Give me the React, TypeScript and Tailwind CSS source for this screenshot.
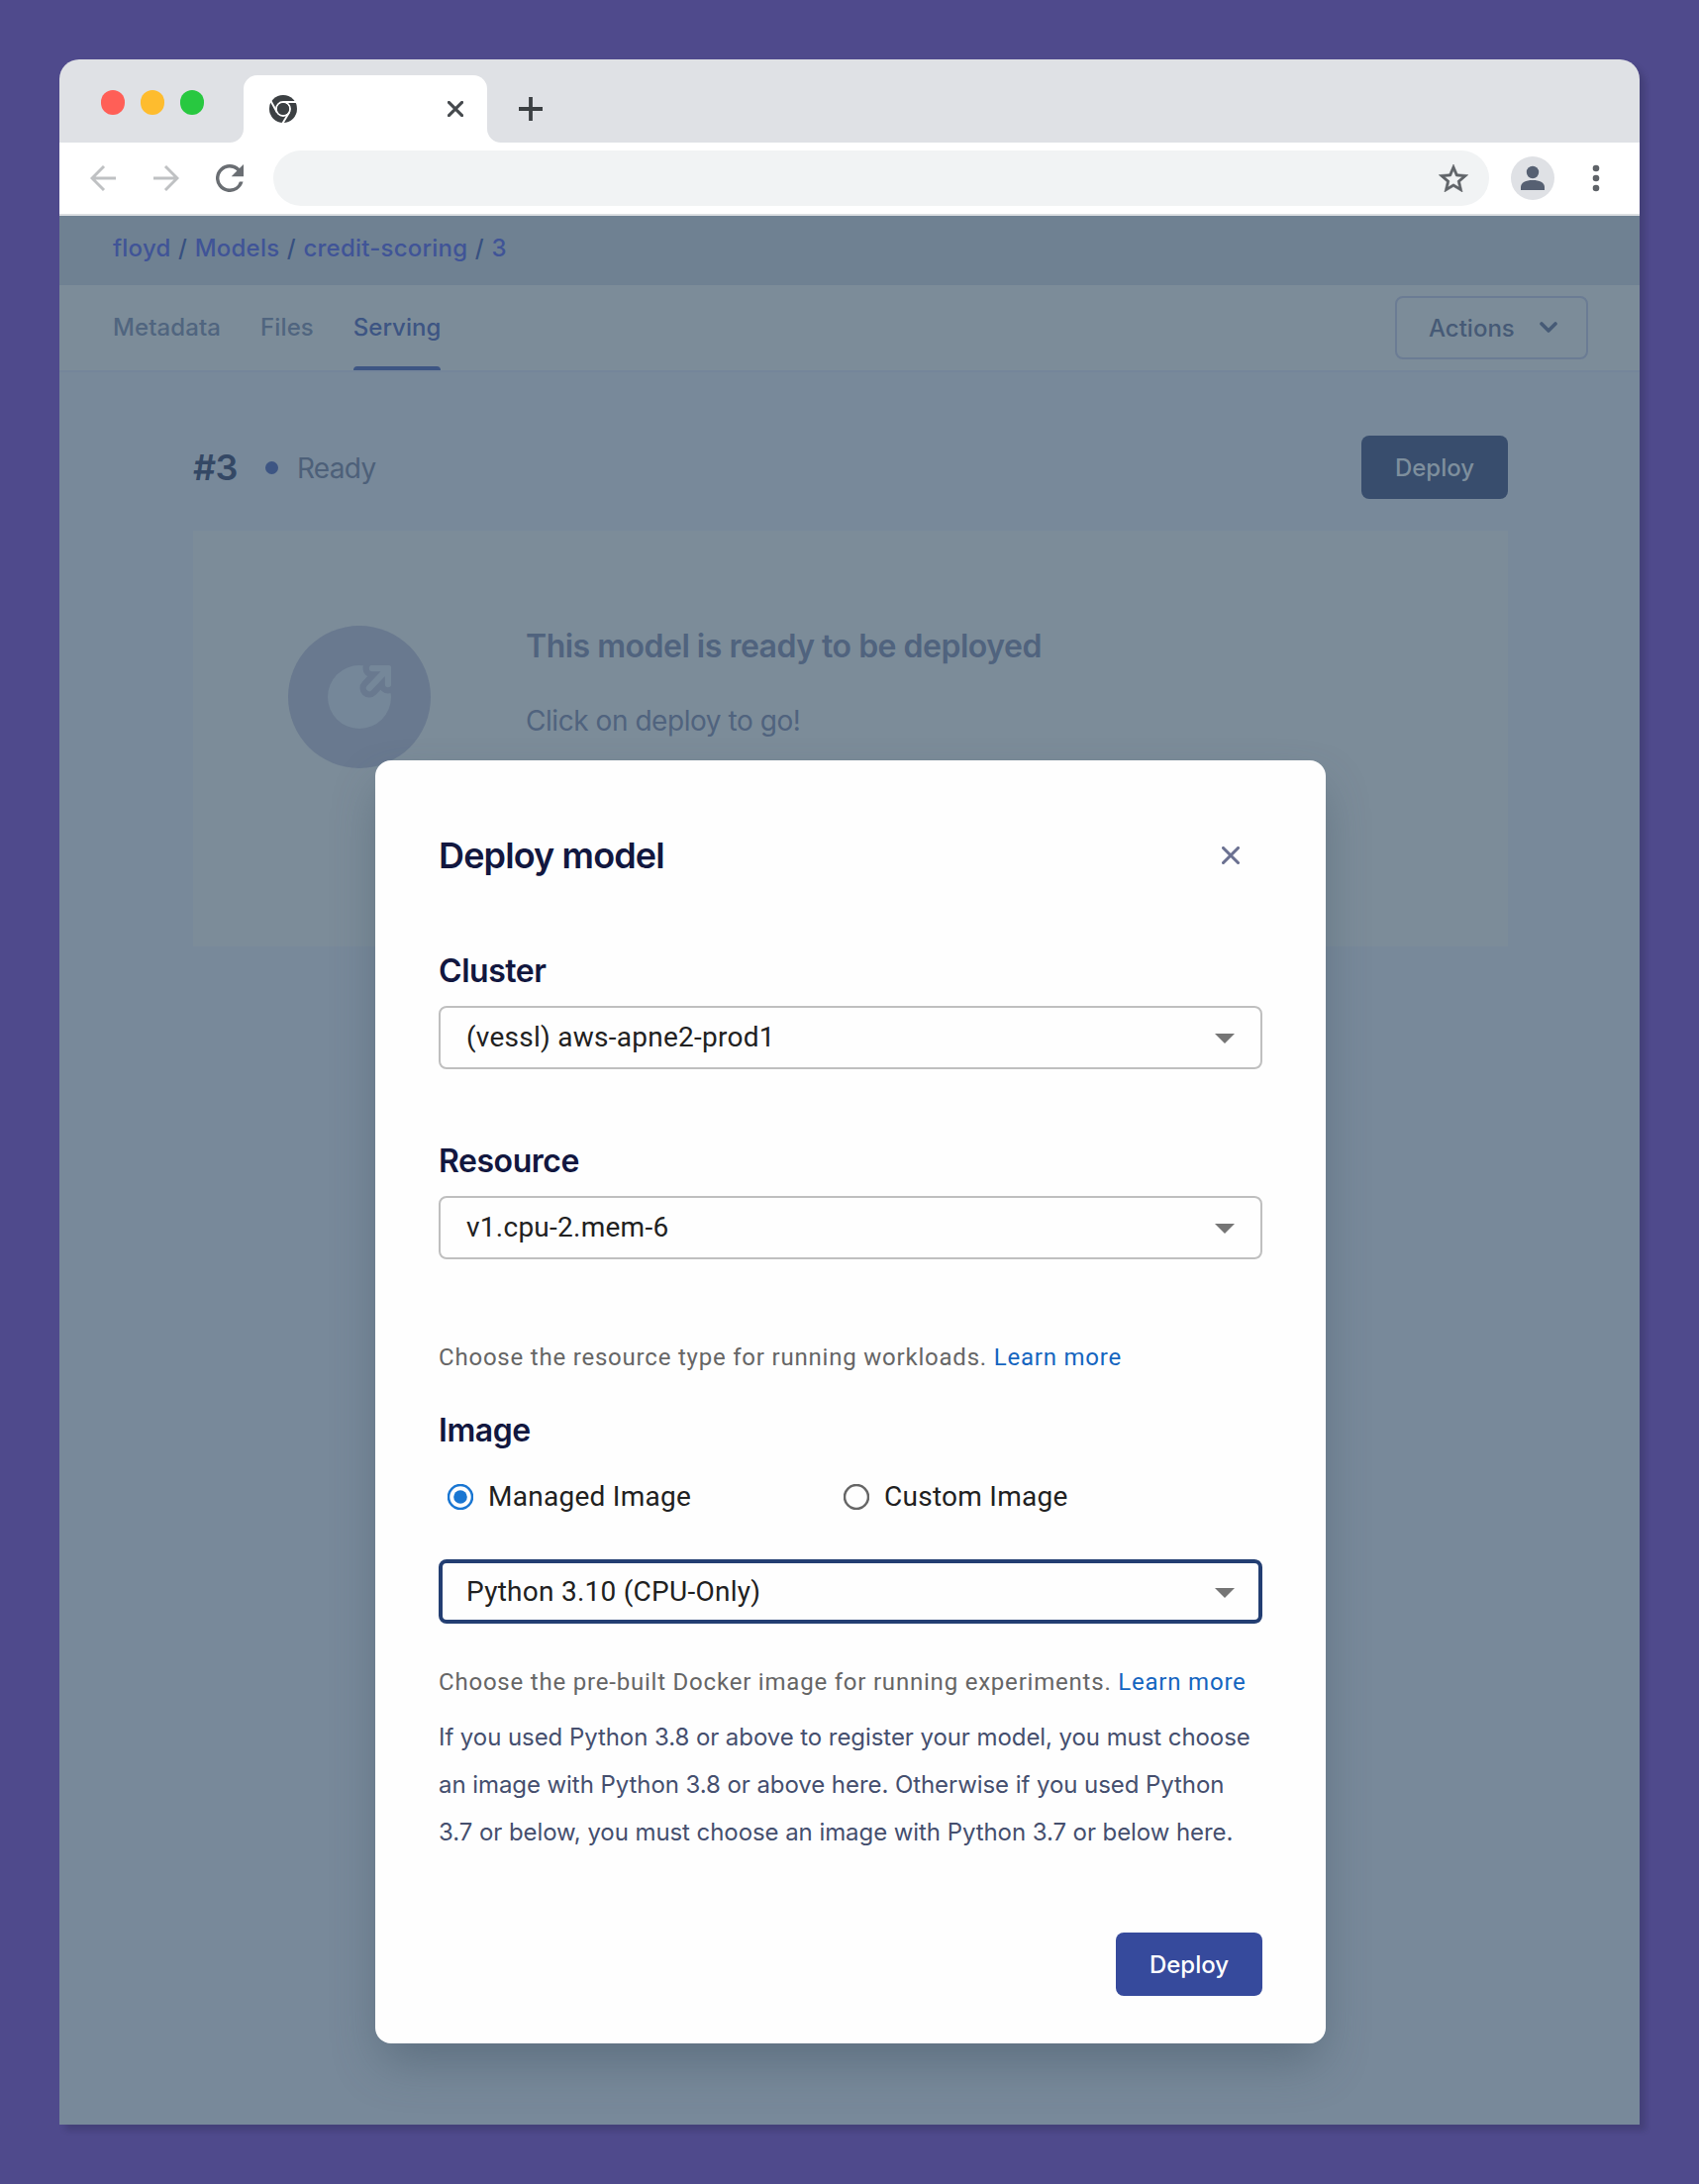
import type { ReactNode } from 'react';

function ChromeLogo() {
  return (
    <svg viewBox="0 0 28 28" className="h-7 w-7">
      <circle cx="14" cy="14" r="14" fill="#3c4043" />
      <g stroke="#ffffff" strokeWidth="1.9" fill="none">
        <circle cx="14" cy="14" r="7" />
        <path d="M14 7H27.2" />
        <path d="M7.9 17.5L1.5 6" />
        <path d="M20.1 17.5L13.3 28.8" />
      </g>
      <circle cx="14" cy="14" r="6.1" fill="#3c4043" />
    </svg>
  );
}

function BrowserTabs() {
  return (
    <div className="flex h-[84px] items-end bg-[#dfe1e5]">
      <div className="flex h-[84px] w-[186px] items-center gap-4 pt-[2px] pl-[42px]">
        <span className="h-[25px] w-6 rounded-full bg-[#ff5f57]" />
        <span className="h-[25px] w-6 rounded-full bg-[#febc2e]" />
        <span className="h-[25px] w-6 rounded-full bg-[#28c840]" />
      </div>
      <svg viewBox="0 0 14 14" className="-ml-[14px] h-3.5 w-3.5">
        <path d="M14 0V14H0A14 14 0 0 0 14 0Z" fill="#ffffff" />
      </svg>
      <div className="flex h-[68px] w-[246px] items-center justify-between rounded-t-[14px] bg-white pr-[24px] pl-[26px]">
        <ChromeLogo />
        <svg viewBox="0 0 16 16" className="h-4 w-4" stroke="#45494d" strokeWidth="3.1">
          <path d="M1.4 1.4L14.6 14.6M14.6 1.4L1.4 14.6" strokeLinecap="round" />
        </svg>
      </div>
      <svg viewBox="0 0 14 14" className="h-3.5 w-3.5">
        <path d="M0 0V14H14A14 14 0 0 1 0 0Z" fill="#ffffff" />
      </svg>
      <svg viewBox="0 0 24 24" className="mb-[22px] ml-[18px] h-6 w-6" stroke="#3c4043" strokeWidth="3.8">
        <path d="M12 0V24M0 12H24" />
      </svg>
    </div>
  );
}

function Toolbar() {
  return (
    <div className="flex h-[74px] items-center border-b-2 border-[#dcdfe2] bg-white pl-[31px]">
      <svg viewBox="0 0 26 26" className="h-[26px] w-[26px]" fill="none" stroke="#bfc1c3" strokeWidth="2.9">
        <path d="M26 13H2M14 1L2 13L14 25" />
      </svg>
      <svg viewBox="0 0 26 26" className="ml-[38px] h-[26px] w-[26px]" fill="none" stroke="#bfc1c3" strokeWidth="2.9">
        <path d="M0 13H24M12 1L24 13L12 25" />
      </svg>
      <svg viewBox="4 4 16 16" className="ml-[37px] h-7 w-7" fill="#6a6e73">
        <path d="M17.65 6.35A7.958 7.958 0 0 0 12 4a8 8 0 1 0 7.73 10h-2.08A5.99 5.99 0 0 1 12 18a6 6 0 1 1 4.22-10.22L13 11h7V4l-2.35 2.35z" />
      </svg>
      <div className="ml-[30px] flex h-14 w-[1228px] items-center justify-end rounded-full bg-[#f1f3f4] pr-[21px]">
        <svg viewBox="2 2 20 19" className="h-[28px] w-[30px]" fill="#5f6368" stroke="#5f6368" strokeWidth="0.35">
          <path d="m22 9.24-7.19-.62L12 2 9.19 8.63 2 9.24l5.46 4.73L5.82 21 12 17.27 18.18 21l-1.63-7.03L22 9.24zM12 15.4l-3.76 2.27 1-4.28-3.32-2.88 4.38-.38L12 6.1l1.71 4.04 4.38.38-3.32 2.88 1 4.28L12 15.4z" />
        </svg>
      </div>
      <svg viewBox="0 0 44 44" className="ml-[22px] h-11 w-11">
        <circle cx="22" cy="22" r="22" fill="#dfe1e5" />
        <circle cx="22" cy="16" r="6.2" fill="#566072" />
        <path d="M10 34V31C10 26.5 15 24 22 24S34 26.5 34 31V34Z" fill="#566072" />
      </svg>
      <svg viewBox="0 0 8 28" className="ml-[38px] h-7 w-2" fill="#5f6368">
        <circle cx="4" cy="4" r="3.3" />
        <circle cx="4" cy="14" r="3.3" />
        <circle cx="4" cy="24" r="3.3" />
      </svg>
    </div>
  );
}

function Breadcrumb() {
  const items = ['floyd', 'Models', 'credit-scoring', '3'];
  return (
    <div className="flex h-[70px] items-center gap-[7.5px] bg-[#6f8192] pb-[4px] pl-[54px] text-2xl font-medium tracking-[0.23px] text-[#405497]">
      {items.map((item, i) => (
        <span key={item} className="flex gap-[7.5px]">
          {i > 0 && <span className="text-[#375080]">/</span>}
          {item}
        </span>
      ))}
    </div>
  );
}

function TabBar() {
  return (
    <div className="flex h-[86px] items-center justify-between bg-[#7c8c99] pr-[52px] pl-[54px] text-2xl font-medium">
      <div className="flex h-full gap-10 tracking-[0.1px] text-[#50657f]">
        <span className="flex items-center">Metadata</span>
        <span className="flex items-center">Files</span>
        <span className="relative flex items-center tracking-normal text-[#3d5583]">
          Serving
          <span className="absolute inset-x-0 bottom-0 h-1 rounded-t-sm bg-[#3d5583]" />
        </span>
      </div>
      <div className="flex h-16 w-[195px] items-center justify-between rounded-lg border-2 border-[#6b7c94] pr-[28px] pl-[32px] text-[#465a76]">
        <span className="pt-[2px]">Actions</span>
        <svg viewBox="0 0 20 12" className="h-3 w-5" fill="none" stroke="#465a76" strokeWidth="3.6" strokeLinecap="round" strokeLinejoin="round">
          <path d="M3 2L10 9L17 2" />
        </svg>
      </div>
    </div>
  );
}

function DeployIcon() {
  return (
    <div className="flex h-36 w-36 items-center justify-center rounded-full bg-[#69798f]">
      <svg viewBox="0 0 64 64" className="h-16 w-16" fill="none" strokeLinecap="round" strokeLinejoin="round">
        <circle cx="32" cy="32" r="32" fill="#758799" />
        <g stroke="#69798f" strokeWidth="19">
          <path d="M45 3H61V19M61 3L42 23" />
        </g>
        <g stroke="#758799" strokeWidth="6.4">
          <path d="M45 3H61V19M61 3L42 23" />
        </g>
      </svg>
    </div>
  );
}

function Page() {
  return (
    <div className="border-t-2 border-[#74859a] pt-16 pr-[133px] pl-[135px]">
      <div className="flex h-16 items-center">
        <h1 className="text-4xl leading-none font-semibold tracking-[-0.6px] text-[#344865]">#3</h1>
        <span className="ml-[28px] h-[13px] w-[13px] rounded-full bg-[#3d5583]" />
        <span className="ml-[19px] pt-px text-[28px] leading-none tracking-[-0.65px] text-[#4d6079]">Ready</span>
        <button className="ml-auto h-16 w-[148px] rounded-lg bg-[#384d6d] pt-[2px] text-2xl font-medium text-[#7e8f9d]">Deploy</button>
      </div>
      <div className="mt-8 flex h-[420px] bg-[#7c8c99] pt-24 pl-24">
        <DeployIcon />
        <div className="ml-24 pt-px text-[#50637e]">
          <h2 className="text-[32px] leading-10 font-semibold tracking-[-0.5px]">This model is ready to be deployed</h2>
          <p className="mt-[35px] text-[28px] leading-10 tracking-[-0.45px]">Click on deploy to go!</p>
        </div>
      </div>
    </div>
  );
}

function Label({ children }: { children: ReactNode }) {
  return <h3 className="pt-px text-[32px] leading-10 font-semibold tracking-[-0.45px] text-[#12173f]">{children}</h3>;
}

function Select({ value, focused = false }: { value: string; focused?: boolean }) {
  return (
    <div
      className={
        focused
          ? 'flex h-[65px] items-center justify-between rounded-lg border-4 border-[#233e72] pt-px pr-6 pl-6'
          : 'flex h-16 items-center justify-between rounded-lg border-2 border-[#bfbfbf] pr-[26px] pl-[26px]'
      }
    >
      <span className="pb-px font-[Roboto,sans-serif] text-[28px] leading-10 tracking-[0.26px] text-[#212121]">{value}</span>
      <svg viewBox="0 0 20 10" className="mt-[2px] h-2.5 w-5" fill="#757575">
        <path d="M0 0H20L10 10Z" />
      </svg>
    </div>
  );
}

function Radio({ label, checked = false }: { label: string; checked?: boolean }) {
  return (
    <div className="flex h-10 w-[400px] items-center pl-[9px]">
      <svg viewBox="0 0 26 26" className="h-[26px] w-[26px]" fill="none">
        <circle cx="13" cy="13" r="12" strokeWidth="2.5" stroke={checked ? '#1976d2' : '#666666'} />
        {checked && <circle cx="13" cy="13" r="6.8" fill="#1976d2" />}
      </svg>
      <span className="ml-[15px] font-[Roboto,sans-serif] text-[28px] leading-10 tracking-[0.26px] text-[#212121]">{label}</span>
    </div>
  );
}

function Help({ children }: { children: ReactNode }) {
  return (
    <p className="font-[Roboto,sans-serif] text-2xl leading-10 tracking-[0.79px] whitespace-nowrap text-[#666666]">
      {children} <a className="text-[#1565c0]">Learn more</a>
    </p>
  );
}

function DeployModal() {
  return (
    <div className="absolute top-[550px] left-[319px] flex h-[1296px] w-[960px] flex-col rounded-2xl bg-[#fefefe] px-16 pt-[72px] pb-12 shadow-[0_24px_48px_-6px_rgba(60,80,96,0.45)]">
      <div className="flex h-12 items-center justify-between pr-[23px]">
        <h2 className="text-4xl font-semibold tracking-[-0.87px] text-[#12173f]">Deploy model</h2>
        <svg viewBox="0 0 18 18" className="h-[18px] w-[18px]" stroke="#6a7090" strokeWidth="3.1" strokeLinecap="round">
          <path d="M1.5 1.5L16.5 16.5M16.5 1.5L1.5 16.5" />
        </svg>
      </div>
      <div className="mt-[72px] flex flex-col gap-[15px]">
        <Label>Cluster</Label>
        <Select value="(vessl) aws-apne2-prod1" />
      </div>
      <div className="mt-[72px] flex flex-col gap-[15px]">
        <Label>Resource</Label>
        <Select value="v1.cpu-2.mem-6" />
      </div>
      <div className="mt-[79px]">
        <Help>Choose the resource type for running workloads.</Help>
      </div>
      <div className="mt-[33px]">
        <Label>Image</Label>
      </div>
      <div className="mt-[27px] flex">
        <Radio label="Managed Image" checked />
        <Radio label="Custom Image" />
      </div>
      <div className="mt-[43px]">
        <Select value="Python 3.10 (CPU-Only)" focused />
      </div>
      <div className="mt-[39px]">
        <Help>Choose the pre-built Docker image for running experiments.</Help>
      </div>
      <p className="mt-[12px] text-2xl leading-12 tracking-[-0.07px] whitespace-nowrap text-[#454f6e]">
        If you used Python 3.8 or above to register your model, you must choose
        <br />
        an image with Python 3.8 or above here. Otherwise if you used Python
        <br />
        3.7 or below, you must choose an image with Python 3.7 or below here.
      </p>
      <button className="mt-auto h-16 w-[148px] self-end rounded-lg bg-[#364a9c] pt-[2px] text-2xl font-medium text-white">Deploy</button>
    </div>
  );
}

export default function App() {
  return (
    <div className="h-[2206px] w-[1716px] bg-[#4f4a8c] p-[60px] font-[Inter,sans-serif]">
      <div className="h-[2086px] w-[1596px] rounded-t-[20px] shadow-[6px_6px_6px_rgba(0,0,0,0.14)]">
        <div className="overflow-hidden rounded-t-[20px]">
          <BrowserTabs />
          <Toolbar />
        </div>
        <div className="relative h-[1928px] bg-[#78899a]">
          <Breadcrumb />
          <TabBar />
          <Page />
          <DeployModal />
        </div>
      </div>
    </div>
  );
}
